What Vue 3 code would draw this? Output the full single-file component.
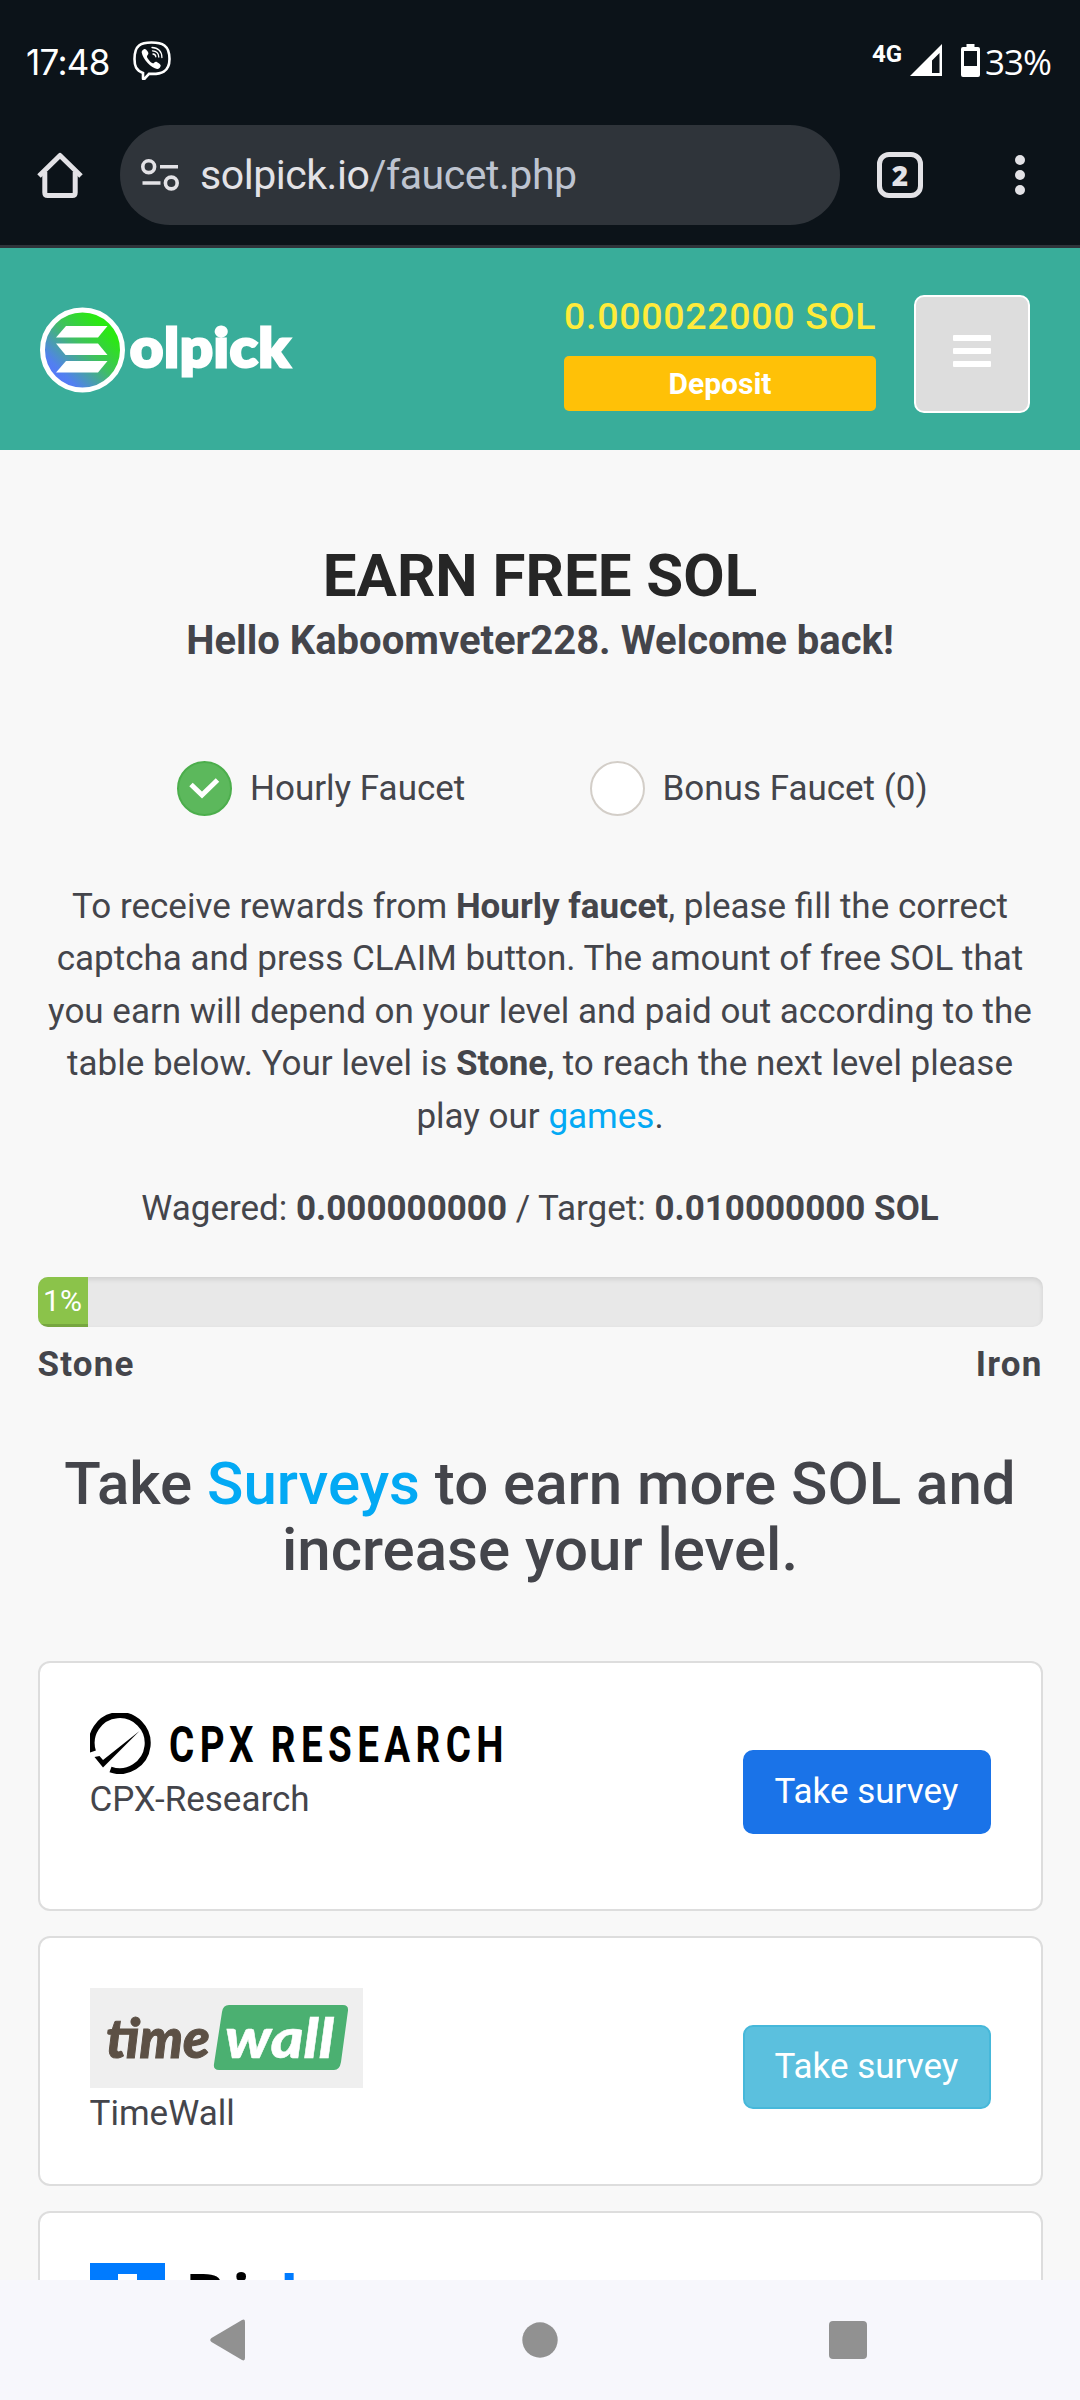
<script setup>
const surveys = [
  { id: 'cpx', label: 'CPX-Research', tone: 'primary' },
  { id: 'timewall', label: 'TimeWall', tone: 'info' },
  { id: 'bit', label: '', tone: '' },
]
const progress = { value: 1, width: 50 }
</script>

<template>
  <div class="screen">
    <div class="status">
      <span class="clock">17:48</span>
      <svg class="viber" width="38" height="39" viewBox="0 0 38 39" fill="none">
        <path d="M18.500 1.500C8 1.500 1.500 4 1.500 18c0 7 1.500 11.500 8.500 14v5.500c0 .8.900.9 1.400.3l4.600-5c12 .8 20.500-1.800 20.500-14.800C36.500 4 29 1.500 18.500 1.500z" stroke="#fff" stroke-width="2.600" />
        <path d="M10.500 8.500c1.500-1 2.600-.2 3.800 1.500 1.500 2 1.400 3 .2 4.200-1 1-.6 2 .8 4 1.600 2.300 2.900 3.600 4.400 4.100 1.300.4 1.700-1.500 3.200-1.600 1.300 0 4.800 2.600 4.800 3.700 0 1.600-2 3.800-3.600 3.600-5.600-.8-14.400-9.800-15.400-16.500-.2-1.300.8-2.400 1.800-3z" fill="#fff" />
        <path d="M19 6.500c6 0 10 4 9.900 10M19.500 9.800c4 .2 6.200 2.600 6.300 6.200M20 13c1.800.2 2.700 1.200 2.800 2.800" stroke="#fff" stroke-width="1.300" stroke-linecap="round" />
      </svg>
      <span class="net">4G</span>
      <svg class="signal" width="32" height="32" viewBox="0 0 32 32"><path fill="#fff" fill-rule="evenodd" d="M32 0V32H0zM29.500 9L22 16.500V29h7.500z" /></svg>
      <svg class="battery" width="19" height="33" viewBox="0 0 19 33"><path fill="#fff" fill-rule="evenodd" d="M5.500 0h8v3H17q2 0 2 2v26q0 2-2 2H2q-2 0-2-2V5q0-2 2-2h3.500zM3 7v15h13V7z" /></svg>
      <span class="pct">33%</span>
    </div>

    <div class="toolbar">
      <svg class="home" width="46" height="46" viewBox="0 0 46 46" fill="none" stroke="#e3e2e6" stroke-width="5">
        <path d="M2 24L23 3.500 44 24" stroke-linejoin="round" /><path d="M7.800 20v20.500q0 3 3 3h24.400q3 0 3-3V20" />
      </svg>
      <div class="omnibox">
        <svg class="tune" width="38" height="32" viewBox="0 0 38 32" fill="none" stroke="#e3e2e6" stroke-width="3.600">
          <circle cx="7.700" cy="7.700" r="5.900" /><path d="M19 7.700h18M1.500 24h18" /><circle cx="30.300" cy="24" r="5.900" />
        </svg>
        <span class="url">solpick.io<i>/faucet.php</i></span>
      </div>
      <span class="tabs">2</span>
      <svg class="dots" width="10" height="40" viewBox="0 0 10 40" fill="#e3e2e6"><circle cx="5" cy="5" r="5" /><circle cx="5" cy="20" r="5" /><circle cx="5" cy="35" r="5" /></svg>
    </div>

    <header class="header">
      <svg class="brand" width="256" height="86" viewBox="0 0 256 86">
        <defs>
          <linearGradient id="coin" x1="0.150" y1="0.850" x2="0.850" y2="0.150">
            <stop offset="0" stop-color="#5578fb" /><stop offset="0.120" stop-color="#5280ef" /><stop offset="0.550" stop-color="#3fc25c" /><stop offset="0.900" stop-color="#2ae911" />
          </linearGradient>
        </defs>
        <circle cx="42.500" cy="43" r="40" fill="url(#coin)" stroke="#fff" stroke-width="5" />
        <g fill="#fff">
          <path d="M26 19h41.500L58 30.500H16z" /><path d="M16 36.500h42L67.500 48H25.500z" /><path d="M26 54h41.500L58 65.500H16z" />
        </g>
        <text x="90" y="59.500" class="brand-text" textLength="161" lengthAdjust="spacingAndGlyphs">olpick</text>
      </svg>
      <div class="wallet">
        <div class="balance">0.000022000 SOL</div>
        <button class="deposit">Deposit</button>
      </div>
      <button class="menu"><b></b><b></b><b></b></button>
    </header>

    <main class="page">
      <h1>EARN FREE SOL</h1>
      <h2>Hello Kaboomveter228. Welcome back!</h2>
      <div class="choices">
        <label class="choice"><span class="box checked">
          <svg width="31" height="21" viewBox="0 0 31 21" fill="none" stroke="#fff" stroke-width="5"><path d="M2 6.500L13 17 28.500 2" /></svg>
        </span><span class="caption">Hourly Faucet</span></label>
        <label class="choice"><span class="box"></span><span class="caption">Bonus Faucet (0)</span></label>
      </div>
      <p class="intro">
        To receive rewards from <b>Hourly faucet</b>, please fill the correct<br>
        captcha and press CLAIM button. The amount of free SOL that<br>
        you earn will depend on your level and paid out according to the<br>
        table below. Your level is <b>Stone</b>, to reach the next level please<br>
        play our <a>games</a>.
      </p>
      <p class="wagered">Wagered: <b>0.000000000</b> / Target: <b>0.010000000 SOL</b></p>
      <div class="progress"><div class="bar" :style="{ width: progress.width + 'px' }">{{ progress.value }}%</div></div>
      <div class="levels"><span>Stone</span><span>Iron</span></div>
      <h3>Take <a>Surveys</a> to earn more SOL and<br>increase your level.</h3>

      <section v-for="s in surveys" :key="s.id" class="card">
        <div class="partner">
          <svg v-if="s.id === 'cpx'" width="420" height="61" viewBox="0 0 420 61">
            <path d="M3 38.500A28 28 0 1 1 20.500 56.500" fill="none" stroke="#000" stroke-width="6" />
            <path d="M49.500 18L13 54.500 4.500 44l5-1 3.500 4z" fill="#000" />
            <text x="79" y="49" class="cpx" textLength="340" lengthAdjust="spacingAndGlyphs">CPX RESEARCH</text>
          </svg>
          <svg v-else-if="s.id === 'timewall'" width="273" height="100" viewBox="0 0 273 100">
            <path d="M0 0h273v100H0z" fill="#efefef" />
            <path d="M139 17H253q5.500 0 5 5.500L251 74q-1.300 8-7 8H129q-6 0-5-6l8-52q1-7 7-7z" fill="#4bb071" />
            <text x="16" y="69.500" class="tw" fill="#5c5045" stroke="#5c5045" textLength="104" lengthAdjust="spacingAndGlyphs">time</text>
            <text x="135" y="70" class="tw" fill="#fff" stroke="#fff" stroke-width="0.500" textLength="109" lengthAdjust="spacingAndGlyphs">wall</text>
          </svg>
          <svg v-else width="273" height="75" viewBox="0 0 273 75">
            <path d="M0 0h75v75H0z" fill="#007bff" /><path d="M28 11h19v45H28z" fill="#fff" />
            <text x="95 142" y="55" class="bit">Bi</text><text x="190" y="56" class="bit" fill="#007bff">l</text>
          </svg>
          <div class="label">{{ s.label }}</div>
        </div>
        <button v-if="s.tone" class="take" :class="s.tone">Take survey</button>
      </section>
    </main>

    <nav class="nav">
      <svg width="658" height="42" viewBox="0 0 658 42" fill="#919191">
        <path d="M1.500 19L32 1q3-1.400 3 2v36q0 3.400-3 2L1.500 23q-2.500-2 0-4z" />
        <circle cx="330" cy="21" r="17.700" /><rect x="619" y="2" width="38" height="38" rx="4" />
      </svg>
    </nav>
  </div>
</template>

<style>
body { margin: 0; background: #f8f8f8; }
</style>

<style scoped>
* { box-sizing: border-box; }
.screen { width: 1080px; height: 2400px; overflow: hidden; display: flex; flex-direction: column; background: #f8f8f8; font: 35px/52.5px Roboto, sans-serif; color: #44454b; }
button { border: 0; padding: 0; font-family: inherit; color: #fff; }
svg { display: block; flex: none; }
a { color: #03a9f4; }
.status { height: 125px; flex: none; display: flex; align-items: flex-start; padding: 41px 0 0 26px; background: #0c1319; color: #fff; font-family: "Open Sans", sans-serif; }
.clock { width: 107px; font: 400 35px/42px Inter, sans-serif; letter-spacing: -.7px; }
.net { margin: 1px 0 0 701px; width: 38px; font: 700 24px/24px Roboto, sans-serif; }
.signal, .battery { margin-top: 3px; }
.battery { margin-left: 19px; }
.pct { margin-left: 5px; font: 400 35px/42px "Open Sans", sans-serif; letter-spacing: -1px; }
.toolbar { height: 123px; flex: none; display: flex; align-items: center; padding: 0 0 20px 37px; background: #0c1319; border-bottom: 3px solid #2f343a; }
.omnibox { width: 720px; height: 100px; margin-left: 37px; border-radius: 50px; background: #2f343a; display: flex; align-items: center; padding-left: 21px; }
.url { margin-left: 21px; font: 400 41px/50px Roboto, sans-serif; letter-spacing: -.45px; color: #e3e2e6; white-space: nowrap; }
.url i { font-style: normal; color: #bec4d0; }
.tabs { margin-left: 37px; width: 46px; height: 46px; border: 5px solid #e3e2e6; border-radius: 12px; font: 800 28px/36px "Open Sans", sans-serif; color: #e3e2e6; text-align: center; }
.dots { margin-left: 92px; }
.header { height: 202px; flex: none; display: flex; align-items: flex-start; background: #39ad9a; padding: 0 50px 0 40px; }
.brand { margin-top: 59px; }
.brand-text { font: 900 54px Lato, sans-serif; fill: #fff; stroke: #fff; stroke-width: 3px; letter-spacing: 1px; }
.wallet { margin: 42px 0 0 268px; width: 312px; }
.balance { height: 52px; font-size: 37.500px; line-height: 52px; font-weight: 500; color: #ffeb3b; letter-spacing: .7px; white-space: nowrap; }
.deposit { display: block; width: 312px; height: 55px; margin-top: 14px; border-radius: 5px; background: #ffc107; font-size: 30px; line-height: 53px; font-weight: 700; }
.menu { width: 116px; height: 118px; margin: 47px 0 0 38px; border: 2px solid #fff; border-radius: 10px; background: #ddd; display: flex; flex-direction: column; align-items: center; gap: 7px; padding-top: 38px; }
.menu b { width: 38px; height: 6px; border-radius: 1px; background: #fff; }
.page { flex: 1; min-height: 0; overflow: hidden; padding: 93px 37.500px 0; }
h1, h2, h3, p { margin: 0; text-align: center; white-space: nowrap; }
h1 { font-size: 60px; line-height: 66px; font-weight: 700; color: #262626; }
h2 { margin-top: 10px; font-size: 40px; line-height: 44px; font-weight: 700; }
.choices { display: flex; margin-top: 98px; padding-left: 139.500px; height: 55px; }
.choice { display: flex; align-items: center; width: 412.500px; white-space: nowrap; }
.caption { padding-top: 2px; }
.box { width: 55px; height: 55px; margin-right: 18px; border: 2px solid #d3cec8; border-radius: 50%; background: #fff; display: flex; align-items: center; justify-content: center; }
.box.checked { background: #5cb85c; border-color: #4cae4c; }
.intro { margin: 64.500px -20px 0; }
.wagered { margin-top: 40px; }
.progress { height: 50px; margin-top: 41px; border-radius: 10px; overflow: hidden; background: #e8e8e8; box-shadow: inset 0 2.500px 5px rgba(0,0,0,.1); }
.bar { height: 50px; background: #8bc34a; box-shadow: inset 0 -3px 0 rgba(0,0,0,.15); color: #fff; font-size: 30px; line-height: 48px; text-align: center; }
.levels { margin-top: 12px; display: flex; justify-content: space-between; font-weight: 700; letter-spacing: 1.200px; }
h3 { margin-top: 59.500px; font-size: 60px; line-height: 66px; font-weight: 500; }
.card { height: 250px; margin-bottom: 25px; border: 2px solid #ddd; border-radius: 12px; background: #fff; display: flex; justify-content: space-between; padding: 50px 50px 0; }
h3 + .card { margin-top: 78px; }
.label { white-space: nowrap; }
.take { width: 248px; height: 84px; margin-top: 37px; border-radius: 10px; font-size: 35px; line-height: 80px; border: 2px solid #1a73e8; background: #1a73e8; }
.take.info { background: #5bc0de; border-color: #46b8da; }
.cpx { font: 700 50px Roboto, sans-serif; letter-spacing: 7px; word-spacing: -4px; }
.tw { font: italic 900 56px Lato, sans-serif; }
.bit { font: 700 60px "Open Sans", sans-serif; }
.nav { height: 120px; flex: none; background: #f7f7fc; display: flex; align-items: center; padding-left: 210px; }
</style>
